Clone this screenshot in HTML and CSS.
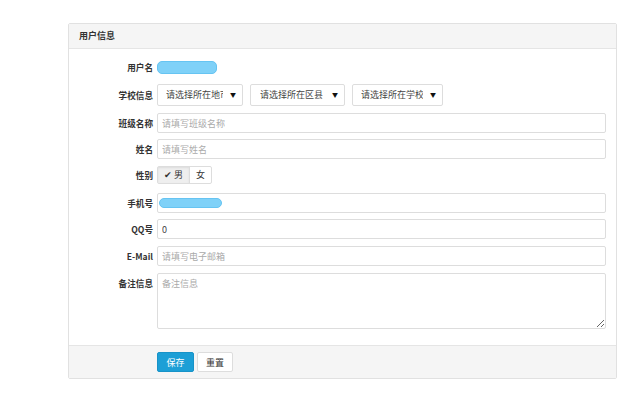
FILE: index.html
```html
<!DOCTYPE html>
<html lang="zh-CN">
<head>
    <meta charset="UTF-8">
    <meta name="viewport" content="width=device-width, initial-scale=1.0">
    <title>用户信息</title>
    <link rel="stylesheet" href="styles.css">
</head>
<body>
    <div class="panel">
        <div class="panel-heading">用户信息</div>
        <form class="panel-body">
            <div class="row">
                <label>用户名</label>
                <div class="field"><span class="blur blur-name"></span></div>
            </div>
            <div class="row">
                <label>学校信息</label>
                <div class="field selects">
                    <div class="select s1"><span>请选择所在地市</span></div>
                    <div class="select s2"><span>请选择所在区县</span></div>
                    <div class="select s3"><span>请选择所在学校</span></div>
                </div>
            </div>
            <div class="row row-tight">
                <label>班级名称</label>
                <input class="input" type="text" placeholder="请填写班级名称">
            </div>
            <div class="row">
                <label>姓名</label>
                <input class="input" type="text" placeholder="请填写姓名">
            </div>
            <div class="row row-sex">
                <label>性别</label>
                <div class="field">
                    <div class="btn-group">
                        <span class="opt active">✔ 男</span>
                        <span class="opt">女</span>
                    </div>
                </div>
            </div>
            <div class="row row-tight">
                <label>手机号</label>
                <div class="input input-box"><span class="blur blur-phone"></span></div>
            </div>
            <div class="row">
                <label>QQ号</label>
                <input class="input" type="text" value="0">
            </div>
            <div class="row">
                <label>E-Mail</label>
                <input class="input" type="text" placeholder="请填写电子邮箱">
            </div>
            <div class="row row-top">
                <label>备注信息</label>
                <textarea class="input textarea" placeholder="备注信息"></textarea>
            </div>
        </form>
        <div class="panel-footer">
            <span></span>
            <div class="buttons">
                <button class="btn btn-primary">保存</button>
                <button class="btn">重置</button>
            </div>
        </div>
    </div>
</body>
</html>
```

FILE: styles.css
```css
* {
    box-sizing: border-box;
    margin: 0;
    padding: 0;
}
body {
    font-family: "Noto Sans CJK SC", "Noto Sans", sans-serif;
    font-size: 9px;
    color: #333;
    background-color: #fff;
}
.panel {
    width: 549px;
    margin: 23px 0 0 68px;
    border: 1px solid #e1e1e1;
    border-radius: 2px;
}
.panel-heading {
    height: 25px;
    line-height: 24px;
    padding-left: 10px;
    background-color: #f5f5f5;
    border-bottom: 1px solid #e5e5e5;
    font-weight: bold;
}
.panel-body {
    padding: 8px 10px 16px 0;
}
.row {
    display: grid;
    grid-template-columns: 84px 1fr;
    column-gap: 4px;
    align-items: center;
    margin-bottom: 7px;
}
.row-tight {
    margin-bottom: 6px;
}
.row:last-child {
    margin-bottom: 0;
}
.row label {
    text-align: right;
    font-size: 8.6px;
    font-weight: bold;
    color: #333;
}
.row-top {
    align-items: start;
}
.row-top label {
    line-height: 20px;
}
.field {
    height: 20px;
    display: flex;
    align-items: center;
}
.row-sex {
    margin-bottom: 9px;
}
.row-sex .field {
    height: 18px;
}
.input {
    display: block;
    width: 100%;
    height: 20px;
    padding: 0 4px;
    border: 1px solid #ddd;
    border-radius: 2px;
    font-family: inherit;
    font-size: 9px;
    color: #444;
    background-color: #fff;
    outline: none;
}
.input::placeholder {
    color: #aaa;
}
.input-box {
    display: flex;
    align-items: center;
    padding: 0 1px;
}
.textarea {
    height: 56px;
    padding: 3px 4px;
    resize: vertical;
}
.blur {
    display: block;
    background-color: #7fd1f8;
    border: 1px solid #66c4f2;
}
.blur-name {
    width: 60px;
    height: 13px;
    border-radius: 5px;
}
.blur-phone {
    width: 63px;
    height: 10px;
    border-radius: 5px;
}
.selects {
    height: 22px;
    gap: 7px;
}
.select {
    position: relative;
    height: 22px;
    line-height: 20px;
    padding: 0 19px 0 8px;
    border: 1px solid #ddd;
    border-radius: 2px;
    white-space: nowrap;
    overflow: hidden;
    color: #444;
}
.select span {
    display: block;
    overflow: hidden;
}
.select::after {
    content: "▼";
    position: absolute;
    right: 6px;
    top: 0;
    font-size: 6px;
    color: #111;
}
.s1 { width: 86px; }
.s2 { width: 95px; padding-left: 9px; }
.s3 { width: 91px; padding-left: 8px; }
.btn-group {
    display: flex;
    height: 18px;
    border: 1px solid #ddd;
    border-radius: 2px;
}
.opt {
    line-height: 16px;
    padding: 0 6px;
    white-space: nowrap;
    color: #333;
}
.opt.active {
    width: 32px;
    padding: 0 4px;
    text-align: center;
    background-color: #efefef;
    border-right: 1px solid #ddd;
    box-shadow: inset 0 1px 2px rgba(0, 0, 0, 0.08);
}
.opt + .opt {
    width: 21px;
}
.panel-footer {
    display: grid;
    grid-template-columns: 84px 1fr;
    column-gap: 4px;
    height: 33px;
    padding-top: 6px;
    background-color: #f5f5f5;
    border-top: 1px solid #e5e5e5;
}
.buttons {
    display: flex;
    gap: 3px;
}
.btn {
    height: 20px;
    padding: 0 8px;
    border: 1px solid #ddd;
    border-radius: 2px;
    background-color: #fff;
    font-family: inherit;
    font-size: 9px;
    color: #333;
    cursor: pointer;
}
.btn-primary {
    width: 37px;
    padding: 0;
    background-color: #1c9fd6;
    border-color: #1893c8;
    color: #fff;
}
```
